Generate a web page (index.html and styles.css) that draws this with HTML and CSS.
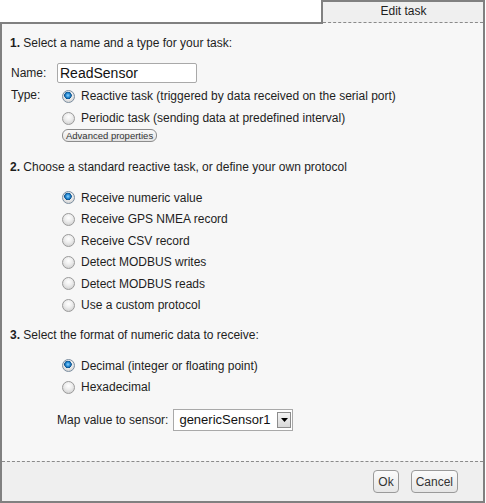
FILE: index.html
```html
<!DOCTYPE html>
<html>
<head>
<meta charset="utf-8">
<link rel="stylesheet" href="styles.css">
</head>
<body>
<div class="dialog">
  <div class="tabrow">
    <div class="spacer"></div>
    <div class="tab"><div class="tab-label">Edit task</div></div>
  </div>
  <div class="panel">
    <div class="content">
      <div class="heading h1"><b>1.</b> Select a name and a type for your task:</div>
      <div class="name-row">
        <span class="lbl">Name:</span>
        <input class="name-input" type="text" value="ReadSensor">
      </div>
      <div class="type-row">
        <span class="lbl type-lbl">Type:</span>
        <div class="type-opts">
          <label class="opt opt22"><input type="radio" name="t" checked><span>Reactive task (triggered by data received on the serial port)</span></label>
          <label class="opt opt22"><input type="radio" name="t"><span>Periodic task (sending data at predefined interval)</span></label>
          <button class="adv">Advanced properties</button>
        </div>
      </div>
      <div class="heading h2"><b>2.</b> Choose a standard reactive task, or define your own protocol</div>
      <div class="opts">
        <label class="opt"><input type="radio" name="p" checked><span>Receive numeric value</span></label>
        <label class="opt"><input type="radio" name="p"><span>Receive GPS NMEA record</span></label>
        <label class="opt"><input type="radio" name="p"><span>Receive CSV record</span></label>
        <label class="opt"><input type="radio" name="p"><span>Detect MODBUS writes</span></label>
        <label class="opt"><input type="radio" name="p"><span>Detect MODBUS reads</span></label>
        <label class="opt"><input type="radio" name="p"><span>Use a custom protocol</span></label>
      </div>
      <div class="heading h3"><b>3.</b> Select the format of numeric data to receive:</div>
      <div class="opts opts3">
        <label class="opt"><input type="radio" name="f" checked><span>Decimal (integer or floating point)</span></label>
        <label class="opt"><input type="radio" name="f"><span>Hexadecimal</span></label>
      </div>
      <div class="map-row">
        <span>Map value to sensor:</span>
        <div class="select">
          <span class="select-val">genericSensor1</span>
          <span class="select-btn"><svg width="7" height="4" viewBox="0 0 7 4"><path d="M0 0H7L3.5 4Z" fill="#000"/></svg></span>
        </div>
      </div>
    </div>
    <div class="footer">
      <button class="btn">Ok</button>
      <button class="btn">Cancel</button>
    </div>
  </div>
</div>
</body>
</html>
```

FILE: styles.css
```css
html, body {
  margin: 0;
  padding: 0;
  background: #ffffff;
}
body {
  font-family: "Liberation Sans", Arial, sans-serif;
  font-size: 12px;
  color: #1e1e1e;
}
.dialog {
  width: 485px;
  height: 503px;
  display: flex;
  flex-direction: column;
}
.tabrow {
  display: flex;
  height: 24px;
  background: #f7f7f7;
}
.spacer {
  flex: 1;
  height: 24px;
  box-sizing: border-box;
  border-bottom: 2px solid #808080;
  background: #ffffff;
}
.tab {
  width: 164px;
  height: 24px;
  box-sizing: border-box;
  border: 2px solid #808080;
  border-bottom: 0;
  background: #f7f7f7;
}
.tab-label {
  height: 21px;
  box-sizing: border-box;
  background: #efefef;
  border-bottom: 1px dashed #8a8a8a;
  text-align: center;
  line-height: 19px;
  padding-left: 1px;
}
.panel {
  flex: 1;
  display: flex;
  flex-direction: column;
  box-sizing: border-box;
  border: 2px solid #808080;
  border-top: 0;
  background: #f7f7f7;
}
.content {
  flex: 1;
  padding: 11px 0 0 8px;
  line-height: 16px;
}
.heading b {
  font-weight: bold;
}
.name-row {
  display: flex;
  align-items: center;
  margin-top: 12px;
  height: 20px;
}
.lbl {
  width: 46px;
  padding-left: 1px;
}
.name-input {
  width: 140px;
  height: 20px;
  box-sizing: border-box;
  border: 1px solid #a9a9a9;
  border-radius: 2px;
  background: #fff;
  font-family: "Liberation Sans", Arial, sans-serif;
  font-size: 14px;
  color: #111;
  padding: 0 0 0 2px;
  margin: 0;
  outline: none;
}
.type-row {
  display: flex;
  margin-top: 2px;
}
.type-lbl {
  padding-top: 2px;
  width: 51px;
}
.type-opts {
  display: flex;
  flex-direction: column;
  align-items: flex-start;
}
.opt {
  display: flex;
  align-items: center;
  height: 21.5px;
}
.opt22 {
  height: 22px;
}
.opts {
  padding-left: 52px;
  margin-top: 12px;
}
.opts3 {
  margin-top: 12px;
}
.opt input {
  -webkit-appearance: none;
  appearance: none;
  margin: 0 6px 0 0;
  width: 13px;
  height: 13px;
  box-sizing: border-box;
  border-radius: 50%;
  border: 1px solid #9a9a9a;
  background: radial-gradient(circle at 50% 35%, #ffffff 0%, #eeeeee 40%, #c8c8c8 100%);
}
.opt input:checked {
  background:
    radial-gradient(circle at 45% 40%, #8fd3ff 0px, #2a8fd8 2px, #0b4f8a 3.5px, transparent 4px),
    radial-gradient(circle at 50% 35%, #ffffff 0%, #eeeeee 40%, #c8c8c8 100%);
  border-color: #7b8ea0;
}
.adv {
  margin-top: 0;
  height: 13px;
  padding: 0 3px;
  border: 1px solid #8c8c8c;
  border-radius: 6px;
  background: linear-gradient(#fafafa, #e4e4e4);
  font-family: "Liberation Sans", Arial, sans-serif;
  font-size: 9.5px;
  line-height: 11px;
  color: #333;
}
.h2 {
  margin-top: 17px;
}
.h3 {
  margin-top: 11px;
}
.map-row {
  display: flex;
  align-items: center;
  margin-top: 11px;
  padding-left: 47px;
  gap: 5px;
}
.select {
  display: flex;
  align-items: center;
  width: 120px;
  height: 22px;
  box-sizing: border-box;
  border: 1px solid #a9a9a9;
  background: #fff;
  padding: 1px;
}
.select-val {
  flex: 1;
  font-size: 13px;
  padding-left: 4px;
  color: #111;
}
.select-btn {
  width: 14px;
  height: 16px;
  box-sizing: border-box;
  border: 1px solid #8c8c8c;
  background: linear-gradient(#f4f4f4, #d8d8d8);
  display: flex;
  align-items: center;
  justify-content: center;
}
.footer {
  height: 40px;
  background: #efefef;
  border-top: 1px dashed #8a8a8a;
  display: flex;
  justify-content: flex-end;
  align-items: flex-start;
  padding: 8px 25px 0 0;
  box-sizing: border-box;
  gap: 12px;
}
.btn {
  height: 23px;
  padding: 0 4px;
  border: 1px solid #9a9a9a;
  border-radius: 4px;
  background: linear-gradient(#fbfbfb, #e6e6e6);
  font-family: "Liberation Sans", Arial, sans-serif;
  font-size: 12px;
  color: #333;
}
```
